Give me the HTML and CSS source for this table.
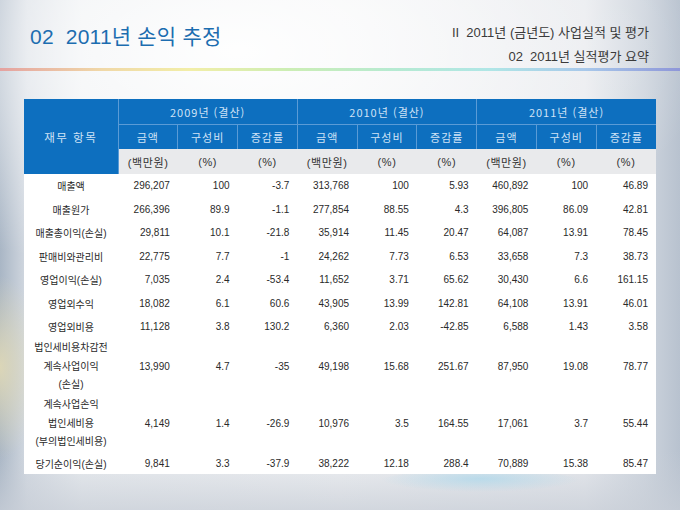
FILE: index.html
```html
<!DOCTYPE html>
<html lang="ko">
<head>
<meta charset="utf-8">
<link rel="stylesheet" href="styles.css">
</head>
<body>
<div class="slide">
  <div class="swoosh"></div>
  <header class="top">
    <h1 class="title">02&nbsp;&nbsp;2011년 손익 추정</h1>
    <div class="crumbs">
      <div class="crumb">II&nbsp;&nbsp;2011년 (금년도) 사업실적 및 평가</div>
      <div class="crumb">02&nbsp;&nbsp;2011년 실적평가 요약</div>
    </div>
  </header>
  <div class="rule"></div>
  <table class="fin">
    <colgroup>
      <col class="c-item">
      <col><col><col><col><col><col><col><col><col>
    </colgroup>
    <thead>
      <tr class="h1">
        <th rowspan="3" class="item-h">재무 항목</th>
        <th colspan="3">2009년 (결산)</th>
        <th colspan="3">2010년 (결산)</th>
        <th colspan="3">2011년 (결산)</th>
      </tr>
      <tr class="h2">
        <th>금액</th><th>구성비</th><th>증감률</th>
        <th>금액</th><th>구성비</th><th>증감률</th>
        <th>금액</th><th>구성비</th><th>증감률</th>
      </tr>
      <tr class="unit">
        <td>(백만원)</td><td>(%)</td><td>(%)</td>
        <td>(백만원)</td><td>(%)</td><td>(%)</td>
        <td>(백만원)</td><td>(%)</td><td>(%)</td>
      </tr>
    </thead>
    <tbody>
      <tr class="r"><td class="it">매출액</td><td>296,207</td><td>100</td><td>-3.7</td><td>313,768</td><td>100</td><td>5.93</td><td>460,892</td><td>100</td><td>46.89</td></tr>
      <tr class="r"><td class="it">매출원가</td><td>266,396</td><td>89.9</td><td>-1.1</td><td>277,854</td><td>88.55</td><td>4.3</td><td>396,805</td><td>86.09</td><td>42.81</td></tr>
      <tr class="r"><td class="it">매출총이익(손실)</td><td>29,811</td><td>10.1</td><td>-21.8</td><td>35,914</td><td>11.45</td><td>20.47</td><td>64,087</td><td>13.91</td><td>78.45</td></tr>
      <tr class="r"><td class="it">판매비와관리비</td><td>22,775</td><td>7.7</td><td>-1</td><td>24,262</td><td>7.73</td><td>6.53</td><td>33,658</td><td>7.3</td><td>38.73</td></tr>
      <tr class="r"><td class="it">영업이익(손실)</td><td>7,035</td><td>2.4</td><td>-53.4</td><td>11,652</td><td>3.71</td><td>65.62</td><td>30,430</td><td>6.6</td><td>161.15</td></tr>
      <tr class="r"><td class="it">영업외수익</td><td>18,082</td><td>6.1</td><td>60.6</td><td>43,905</td><td>13.99</td><td>142.81</td><td>64,108</td><td>13.91</td><td>46.01</td></tr>
      <tr class="r"><td class="it">영업외비용</td><td>11,128</td><td>3.8</td><td>130.2</td><td>6,360</td><td>2.03</td><td>-42.85</td><td>6,588</td><td>1.43</td><td>3.58</td></tr>
      <tr class="r3"><td class="it">법인세비용차감전<br>계속사업이익<br>(손실)</td><td>13,990</td><td>4.7</td><td>-35</td><td>49,198</td><td>15.68</td><td>251.67</td><td>87,950</td><td>19.08</td><td>78.77</td></tr>
      <tr class="r3"><td class="it">계속사업손익<br>법인세비용<br>(부의법인세비용)</td><td>4,149</td><td>1.4</td><td>-26.9</td><td>10,976</td><td>3.5</td><td>164.55</td><td>17,061</td><td>3.7</td><td>55.44</td></tr>
      <tr class="rl"><td class="it">당기순이익(손실)</td><td>9,841</td><td>3.3</td><td>-37.9</td><td>38,222</td><td>12.18</td><td>288.4</td><td>70,889</td><td>15.38</td><td>85.47</td></tr>
    </tbody>
  </table>
</div>
</body>
</html>
```

FILE: styles.css
```css
html, body {
  margin: 0;
  padding: 0;
}
body {
  width: 680px;
  height: 510px;
  overflow: hidden;
  font-family: "Liberation Sans", "Noto Sans CJK KR", sans-serif;
}
.slide {
  position: relative;
  width: 680px;
  height: 510px;
  overflow: hidden;
  background:
    radial-gradient(ellipse 70% 45% at 35% 10%, rgba(255,255,255,0.95), rgba(255,255,255,0) 100%),
    radial-gradient(ellipse 6% 18% at 0% 72%, rgba(232,222,180,0.8), rgba(232,222,180,0) 100%),
    linear-gradient(to right, #a9b6c5 0%, #d3d9e1 4%, #eaedf0 12%, #f1f2f4 50%, #e8eaee 86%, #cdd4dd 95%, #b8c2cf 100%),
    #eef0f3;
}
.slide::after {
  content: "";
  position: absolute;
  left: 0;
  right: 0;
  bottom: 0;
  height: 60px;
  background: linear-gradient(to bottom, rgba(210,215,222,0), rgba(200,206,215,0.75));
}
.swoosh {
  position: absolute;
  left: 380px;
  top: 470px;
  width: 200px;
  height: 22px;
  border-radius: 50%;
  background: radial-gradient(ellipse at 50% 40%, rgba(170,215,235,0.7), rgba(200,230,240,0) 70%);
  z-index: 1;
}
.top {
  position: relative;
  z-index: 2;
  display: flex;
  justify-content: space-between;
  align-items: flex-start;
  height: 68px;
  padding: 0 31px 0 30px;
}
.title {
  margin: 24px 0 0 0;
  font-size: 21px;
  font-weight: normal;
  color: #1c6db0;
  line-height: 26px;
  letter-spacing: 0.2px;
}
.crumbs {
  margin-top: 24px;
  text-align: right;
}
.crumb {
  font-size: 13px;
  line-height: 18px;
  height: 24px;
  color: #3a3a3a;
}
.rule {
  position: relative;
  z-index: 2;
  height: 3px;
  background: linear-gradient(to right, #e4a2a0 0%, #f0d8a8 15%, #f2eea8 28%, #cdeeb4 42%, #b6ead2 58%, #b0e6e6 72%, #a8c8ea 86%, #8e96d8 100%);
}
.fin {
  position: relative;
  z-index: 2;
  margin: 28px 0 0 24px;
  width: 632px;
  table-layout: fixed;
  border-collapse: collapse;
  font-size: 10px;
  color: #2a2a2a;
}
.c-item {
  width: 94px;
}
.fin th {
  background: #0d6fbf;
  color: #cfe2f6;
  font-weight: normal;
  font-size: 11px;
  font-family: "Noto Sans CJK KR", "Liberation Sans", sans-serif;
  letter-spacing: 1px;
  border: 1px solid #5a9bd6;
  padding: 0;
  text-align: center;
}
.fin .item-h {
  border-left: none;
  border-bottom: none;
  font-size: 11.5px;
  letter-spacing: 1.5px;
}
.fin tr.h1 th {
  border-top: none;
  height: 25px;
}
.fin tr.h1 th:last-child,
.fin tr.h2 th:last-child {
  border-right: none;
}
.fin tr.h2 th {
  border-bottom: none;
  height: 24px;
}
.fin .unit td {
  background: #e9eaec;
  height: 25px;
  text-align: center;
  font-size: 11px;
  color: #333;
  padding: 0;
  letter-spacing: 0.6px;
}
.fin tbody td {
  background: #ffffff;
  text-align: right;
  padding: 0 8px 0 0;
  white-space: nowrap;
}
.fin tbody td.it {
  text-align: center;
  padding: 0;
}
.fin tr.r td {
  height: 23.5px;
}
.fin tr.r3 td {
  height: 57px;
  line-height: 18.5px;
}
.fin tr.rl td {
  height: 21px;
}
```
